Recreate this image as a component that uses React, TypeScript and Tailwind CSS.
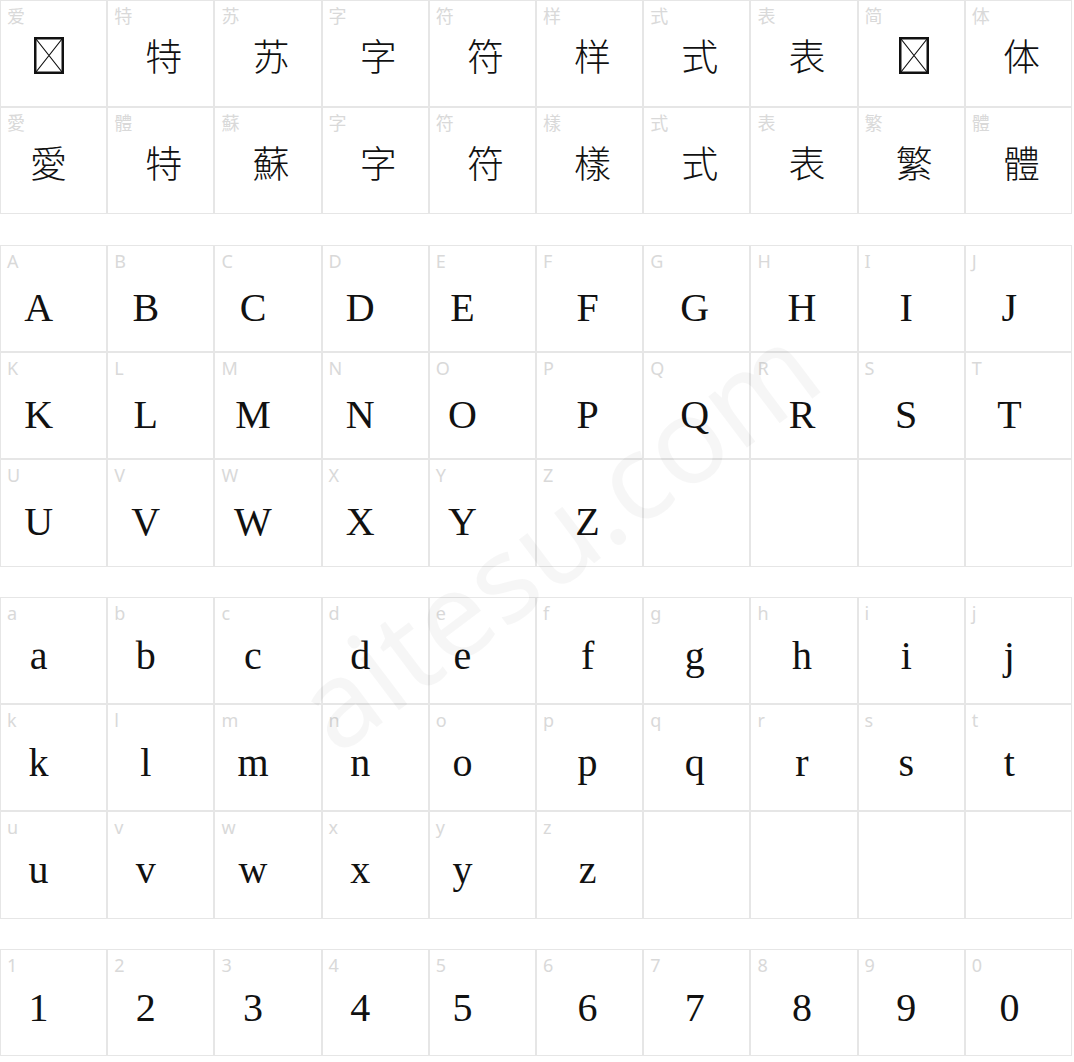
import React from 'react';

type Row = { kind: 'cjk' | 'upper' | 'lower'; labels: string[]; glyphs: string[] };

// where a missing glyph shows the font's notdef box
const TOFU = '□';

const sections: Row[][] = [
    [
        {
            kind: 'cjk',
            labels: ['爱', '特', '苏', '字', '符', '样', '式', '表', '简', '体'],
            glyphs: [TOFU, '特', '苏', '字', '符', '样', '式', '表', TOFU, '体'],
        },
        {
            kind: 'cjk',
            labels: ['愛', '體', '蘇', '字', '符', '樣', '式', '表', '繁', '體'],
            glyphs: ['愛', '特', '蘇', '字', '符', '樣', '式', '表', '繁', '體'],
        },
    ],
    [
        { kind: 'upper', labels: 'ABCDEFGHIJ'.split(''), glyphs: 'ABCDEFGHIJ'.split('') },
        { kind: 'upper', labels: 'KLMNOPQRST'.split(''), glyphs: 'KLMNOPQRST'.split('') },
        { kind: 'upper', labels: 'UVWXYZ'.split(''), glyphs: 'UVWXYZ'.split('') },
    ],
    [
        { kind: 'lower', labels: 'abcdefghij'.split(''), glyphs: 'abcdefghij'.split('') },
        { kind: 'lower', labels: 'klmnopqrst'.split(''), glyphs: 'klmnopqrst'.split('') },
        { kind: 'lower', labels: 'uvwxyz'.split(''), glyphs: 'uvwxyz'.split('') },
    ],
    [
        { kind: 'lower', labels: '1234567890'.split(''), glyphs: '1234567890'.split('') },
    ],
];

// horizontal nudge of the big glyph, per column
const latinShift = [
    '-translate-x-[15px]',
    '-translate-x-[15px]',
    '-translate-x-[15px]',
    '-translate-x-[15px]',
    '-translate-x-[20px]',
    '-translate-x-[2px]',
    '-translate-x-[2px]',
    '-translate-x-[2px]',
    '-translate-x-[5px]',
    '-translate-x-[9px]',
];
const cjkShift = [
    '-translate-x-[5px]',
    'translate-x-[3px]',
    'translate-x-[3px]',
    'translate-x-[3px]',
    'translate-x-[3px]',
    'translate-x-[3px]',
    'translate-x-[3px]',
    'translate-x-[3px]',
    'translate-x-[3px]',
    'translate-x-[3px]',
];

const Tofu = () => (
    <svg width="30" height="37" viewBox="0 0 30 37" className="inline-block">
        <rect x="1.25" y="1.25" width="27.5" height="34.5" fill="none" stroke="#111" strokeWidth="2.5" />
        <path d="M2 2 L28 35 M28 2 L2 35" stroke="#111" strokeWidth="1.2" />
    </svg>
);

const Cell: React.FC<{ kind: Row['kind']; label?: string; glyph?: string; col: number }> = ({
    kind,
    label,
    glyph,
    col,
}) => {
    const glyphTop = kind === 'cjk' ? 'mt-[12px]' : kind === 'upper' ? 'mt-[18px]' : 'mt-[14px]';
    return (
        <div className="aspect-square border border-[#e6e6e6] bg-white">
            {label && (
                <div className="h-[24px] pl-[6px] pt-[5px] font-['Noto_Sans','Noto_Sans_CJK_SC',sans-serif] text-[18px] leading-[20px] text-[#d9d9d9]">
                    {label}
                </div>
            )}
            {glyph && (
                <div className={`flex justify-center ${glyphTop}`}>
                    {kind === 'cjk' ? (
                        <span
                            className={`${cjkShift[col]} flex h-[37px] items-center font-['Noto_Sans_CJK_SC',sans-serif] text-[37px] font-light leading-[37px] text-[#111]`}
                        >
                            {glyph === TOFU ? <Tofu /> : glyph}
                        </span>
                    ) : (
                        <span
                            className={`${latinShift[col]} font-['Liberation_Serif',serif] text-[40px] leading-[40px] text-[#111]`}
                        >
                            {glyph}
                        </span>
                    )}
                </div>
            )}
        </div>
    );
};

export default function App() {
    return (
        <div className="relative min-h-[1062px] overflow-hidden bg-white">
            <div className="flex w-[1072px] flex-col gap-[30.5px]">
                {sections.map((rows, si) => (
                    <div key={si} className="grid grid-cols-10">
                        {rows.flatMap((row, ri) =>
                            Array.from({ length: 10 }, (_, c) => (
                                <Cell
                                    key={`${ri}-${c}`}
                                    kind={row.kind}
                                    label={row.labels[c]}
                                    glyph={row.glyphs[c]}
                                    col={c}
                                />
                            )),
                        )}
                    </div>
                ))}
            </div>

            {/* watermark */}
            <div className="pointer-events-none absolute left-[555px] top-[535px] -translate-x-1/2 -translate-y-1/2 -rotate-[37deg] whitespace-nowrap font-['Noto_Sans',sans-serif] text-[120px] leading-none text-black/[0.035]">
                aitesu.com
            </div>
        </div>
    );
}
